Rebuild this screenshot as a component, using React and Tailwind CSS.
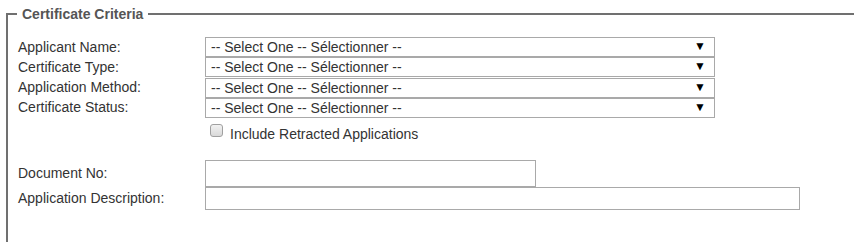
const selectRows = [
  'Applicant Name:',
  'Certificate Type:',
  'Application Method:',
  'Certificate Status:',
];

function FakeSelect() {
  return (
    <div className="relative w-[510px] h-[20px]">
      <select className="appearance-none w-full h-full border border-[#a9a9a9] bg-white pl-[5px] text-[14px] leading-[18px] text-[#333] outline-none">
        <option>-- Select One -- Sélectionner --</option>
      </select>
      <span className="pointer-events-none absolute right-[9px] top-[3px] text-[12px] leading-[13px] text-black">▼</span>
    </div>
  );
}

export default function App() {
  return (
    <div className="h-[242px] w-[854px] overflow-hidden bg-white font-['Liberation_Sans',Arial,sans-serif] text-[14px] text-[#333]">
      <fieldset className="ml-[6px] mt-[6px] w-[900px] h-[300px] border-2 border-[#707070] pl-[10px] pt-[15px]">
        <legend className="ml-[-1px] px-[5px] font-bold text-[#555] leading-[16px]">Certificate Criteria</legend>

        <div className="grid grid-cols-[187px_auto] gap-y-[0.34px]">
          {selectRows.map(label => (
            <div key={label} className="contents">
              <div className="h-[20px] flex items-center">{label}</div>
              <FakeSelect />
            </div>
          ))}
        </div>

        <div className="flex items-start mt-[6px] ml-[192px] h-[20px]">
          <div className="w-[13px] h-[13px] rounded-[3px] border border-[#a0a0a0] bg-gradient-to-b from-[#f2f2f2] to-[#d9d9d9]" />
          <span className="ml-[7px] leading-[20px]">Include Retracted Applications</span>
        </div>

        <div className="grid grid-cols-[187px_auto] mt-[16px]">
          <div className="h-[27px] flex items-center">Document No:</div>
          <input type="text" className="w-[331px] h-[27px] border border-[#a9a9a9] bg-white outline-none" />
          <div className="h-[23px] flex items-center">Application Description:</div>
          <input type="text" className="w-[595px] h-[23px] border border-[#a9a9a9] bg-white outline-none" />
        </div>
      </fieldset>
    </div>
  );
}
